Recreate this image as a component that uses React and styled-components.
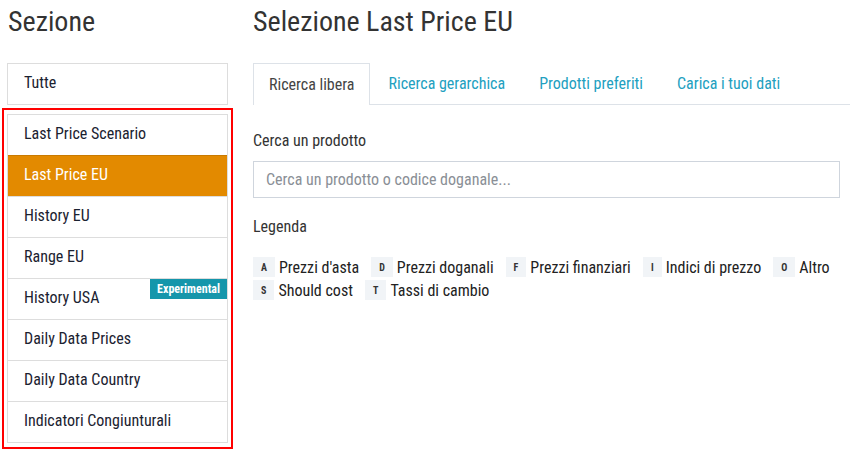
import React from "react";
import styled, { createGlobalStyle } from "styled-components";

const Global = createGlobalStyle`
  html, body { margin: 0; padding: 0; background: #fff; }
  body { font-family: "Roboto Condensed", Roboto, "Liberation Sans", sans-serif; color: #222; }
  * { box-sizing: border-box; }
`;

const Page = styled.div`
  display: flex;
  width: 850px;
  height: 453px;
  overflow: hidden;
`;

const Sidebar = styled.aside`
  width: 253px;
  flex: none;
  padding-left: 2px;
`;

const Title = styled.h1`
  margin: 0;
  height: 63px;
  padding: 6px 0 0 ${(p) => p.$indent || 0}px;
  font-size: 28px;
  font-weight: 400;
  line-height: 32px;
  color: #333;
`;

const SingleBox = styled.div`
  margin-left: 5px;
  width: 221px;
  border: 1px solid #ddd;
`;

const Highlight = styled.div`
  margin-top: 3px;
  width: 231px;
  border: 2px solid #f00;
  padding: 4px 3px;
`;

const List = styled.ul`
  list-style: none;
  margin: 0;
  padding: 0;
  border: 1px solid #ddd;
`;

const Item = styled.li`
  position: relative;
  height: ${(p) => (p.$first ? 40 : 41)}px;
  display: flex;
  align-items: center;
  padding: 0 0 3px 16px;
  font-size: 16px;
  color: ${(p) => (p.$active ? "#fff" : "#1b2230")};
  background: ${(p) => (p.$active ? "#e38a00" : "#fff")};
  border-top: ${(p) => (p.$first ? "none" : p.$active ? "1px solid #c97a00" : "1px solid #ddd")};
`;

const Badge = styled.span`
  position: absolute;
  right: 0;
  top: 0;
  height: 20px;
  padding: 0 7px;
  background: #1596ab;
  color: #fff;
  font-size: 12px;
  font-weight: 700;
  display: flex;
  align-items: center;
`;

const Main = styled.main`
  width: 597px;
  flex: none;
`;

const Tabs = styled.nav`
  display: flex;
  width: 597px;
  height: 42px;
  border-bottom: 1px solid #dde2e8;
`;

const Tab = styled.div`
  display: flex;
  align-items: center;
  padding: 0 15px 1px;
  margin-right: 2px;
  font-size: 16px;
  color: ${(p) => (p.$active ? "#444" : "#22a0c0")};
  border: 1px solid ${(p) => (p.$active ? "#dde2e8" : "transparent")};
  border-bottom: none;
  background: ${(p) => (p.$active ? "#fff" : "transparent")};
  height: ${(p) => (p.$active ? 42 : 41)}px;
`;

const Label = styled.div`
  font-size: 16px;
  color: #333;
  margin: ${(p) => p.$mt || 0}px 0 ${(p) => p.$mb || 0}px;
`;

const Input = styled.input`
  display: block;
  width: 587px;
  height: 37px;
  border: 1px solid #cfd5dd;
  padding: 0 12px;
  font-family: inherit;
  font-size: 16px;
  color: #333;
  outline: none;
  &::placeholder { color: #8a8f96; }
`;

const Legend = styled.div`
  display: flex;
  flex-wrap: wrap;
  width: 590px;
  row-gap: 3px;
  column-gap: 12px;
`;

const LegendItem = styled.div`
  display: flex;
  align-items: center;
  gap: 4px;
  font-size: 16px;
  color: #222;
  height: 20px;
`;

const Key = styled.span`
  min-width: 19px;
  height: 20px;
  padding: 0 8px;
  background: #f1f4f7;
  font-size: 10px;
  font-weight: 700;
  color: #333;
  display: flex;
  align-items: center;
  justify-content: center;
`;

const sections = [
  "Last Price Scenario",
  "Last Price EU",
  "History EU",
  "Range EU",
  "History USA",
  "Daily Data Prices",
  "Daily Data Country",
  "Indicatori Congiunturali",
];

const legend = [
  ["A", "Prezzi d'asta"],
  ["D", "Prezzi doganali"],
  ["F", "Prezzi finanziari"],
  ["I", "Indici di prezzo"],
  ["O", "Altro"],
  ["S", "Should cost"],
  ["T", "Tassi di cambio"],
];

export default function App() {
  return (
    <>
      <Global />
      <Page>
        <Sidebar>
          <Title $indent={6}>Sezione</Title>
          <SingleBox>
            <Item $first>Tutte</Item>
          </SingleBox>
          <Highlight>
            <List>
              {sections.map((s, i) => (
                <Item key={s} $first={i === 0} $active={s === "Last Price EU"}>
                  {s}
                  {s === "History USA" && <Badge>Experimental</Badge>}
                </Item>
              ))}
            </List>
          </Highlight>
        </Sidebar>
        <Main>
          <Title>Selezione Last Price EU</Title>
          <Tabs>
            <Tab $active>Ricerca libera</Tab>
            <Tab>Ricerca gerarchica</Tab>
            <Tab>Prodotti preferiti</Tab>
            <Tab>Carica i tuoi dati</Tab>
          </Tabs>
          <Label $mt={26} $mb={11}>Cerca un prodotto</Label>
          <Input placeholder="Cerca un prodotto o codice doganale..." />
          <Label $mt={19} $mb={21}>Legenda</Label>
          <Legend>
            {legend.map(([k, t]) => (
              <LegendItem key={k}>
                <Key>{k}</Key>
                {t}
              </LegendItem>
            ))}
          </Legend>
        </Main>
      </Page>
    </>
  );
}
